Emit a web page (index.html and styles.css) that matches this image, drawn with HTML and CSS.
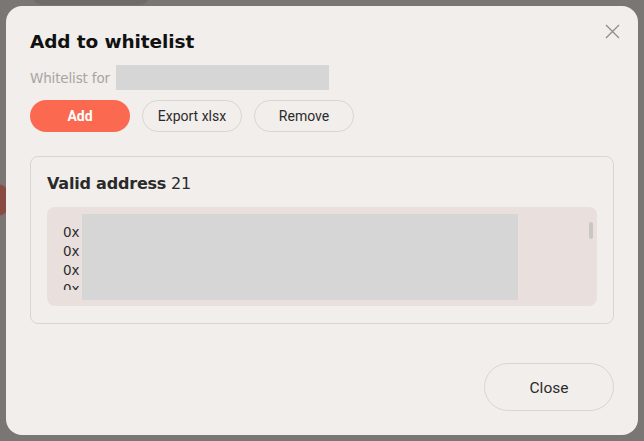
FILE: index.html
```html
<!DOCTYPE html>
<html>
<head>
<meta charset="utf-8">
<link rel="stylesheet" href="styles.css">
</head>
<body>
<div class="backdrop">
  <div class="bg-tab"></div>
  <div class="bg-dot"></div>
  <div class="modal">
    <button class="x-btn" aria-label="close">
      <svg width="15" height="15" viewBox="0 0 15 15"><path d="M1 1L14 14M14 1L1 14" stroke="#8f8c8a" stroke-width="1.3" fill="none"/></svg>
    </button>
    <h1 class="title">Add to whitelist</h1>
    <div class="sub"><span class="sub-label">Whitelist for</span><span class="mask mask-name"></span></div>
    <div class="actions">
      <button class="btn btn-primary">Add</button>
      <button class="btn btn-outline">Export xlsx</button>
      <button class="btn btn-outline">Remove</button>
    </div>
    <div class="card">
      <div class="card-title"><b>Valid address</b> 21</div>
      <div class="list">
        <div class="list-inner">
          <div class="addr">0x</div>
          <div class="addr">0x</div>
          <div class="addr">0x</div>
          <div class="addr">0x</div>
        </div>
        <span class="mask mask-list"></span>
        <span class="thumb"></span>
      </div>
    </div>
    <div class="footer">
      <button class="btn-close">Close</button>
    </div>
  </div>
</div>
</body>
</html>
```
FILE: styles.css
```css
* { box-sizing: border-box; }
html, body { margin: 0; padding: 0; }
body { width: 644px; height: 441px; overflow: hidden; font-family: "DejaVu Sans", sans-serif; }
.backdrop {
  position: relative;
  width: 644px; height: 441px;
  background: #7a7674;
  padding: 6px;
}
.bg-tab {
  position: absolute; left: 30px; top: -20px; width: 122px; height: 25px;
  background: #6f6b69; border-radius: 0 0 14px 14px;
}
.bg-dot {
  position: absolute; left: -20px; top: 184px; width: 32px; height: 32px;
  background: #8a4a41; border-radius: 50%;
}
.modal {
  position: relative;
  width: 632px; height: 429px;
  background: #f1eeeb;
  border-radius: 16px;
  padding: 24px 24px 24px 24px;
  display: flex; flex-direction: column;
}
.x-btn {
  position: absolute; right: 13px; top: 12px;
  width: 26px; height: 26px; padding: 0; border: 0; background: transparent;
  display: flex; align-items: center; justify-content: center;
}
.title {
  margin: 0;
  font-family: "DejaVu Sans", sans-serif;
  font-weight: bold; font-size: 18.5px; line-height: 24px; color: #111;
  letter-spacing: -0.1px;
}
.sub { display: flex; align-items: center; margin-top: 11px; height: 25px; }
.sub-label { font-size: 13.5px; color: #a9a5a2; margin-right: 6px; letter-spacing: -0.15px; }
.mask { background: #d6d6d6; display: block; }
.mask-name { width: 213px; height: 25px; }
.actions { display: flex; gap: 12px; margin-top: 10px; }
.btn {
  width: 100px; height: 32px; border-radius: 16px;
  font-family: Roboto, sans-serif; font-size: 14px;
  display: flex; align-items: center; justify-content: center;
}
.btn-primary { background: #fb6a50; border: 0; color: #fff; font-weight: bold; }
.btn-outline { background: transparent; border: 1px solid #d8d5d2; color: #2b2b2b; }
.card {
  margin-top: 24px;
  border: 1px solid #d8d5d2; border-radius: 8px;
  padding: 16px 16px 16px 16px;
  height: 168px;
}
.card-title { font-size: 16px; color: #2a2a2a; line-height: 22px; letter-spacing: -0.2px; }
.card-title b { font-weight: bold; }
.list {
  position: relative; margin-top: 12px;
  height: 99px; background: #e9e0dd; border-radius: 8px;
  padding: 16px 16px 0 16px; overflow: hidden;
}
.list-inner { height: 67px; overflow: hidden; }
.addr { font-size: 13.5px; line-height: 19px; color: #2c2c2c; height: 19px; }
.mask-list { position: absolute; left: 35px; top: 7px; width: 436px; height: 86px; }
.thumb {
  position: absolute; right: 4px; top: 15px; width: 4px; height: 17px;
  background: #c9c6c4; border-radius: 2px;
}
.footer { margin-top: auto; display: flex; justify-content: flex-end; margin-bottom: 0; }
.btn-close {
  width: 130px; height: 48px; border-radius: 24px;
  border: 1px solid #d8d5d2; background: transparent;
  padding-top: 3px;
  font-family: Roboto, sans-serif; font-size: 15.5px; color: #2b2b2b;
}
```
